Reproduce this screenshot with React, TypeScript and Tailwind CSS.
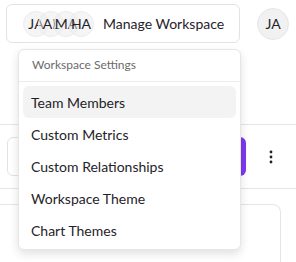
import React from 'react';

const team = ['JA', 'AL', 'MA', 'HA'];
const items = ['Team Members', 'Custom Metrics', 'Custom Relationships', 'Workspace Theme', 'Chart Themes'];

export default function App() {
  return (
    <div className="relative w-[296px] h-[262px] overflow-hidden bg-white font-['Lato',sans-serif] text-[#1f2328]">
      {/* Header */}
      <div className="h-[125px] border-b border-[#e5e5e5]">
        <div className="flex items-center pl-[6px] pt-[4px]">
          <button className="flex items-center gap-[9px] h-[39px] pl-4 pr-[15px] border border-[#e3e3e3] rounded-md bg-white">
            <div className="flex">
              {team.map((t, i) => (
                <div
                  key={t}
                  className={`w-[26px] h-[26px] shrink-0 rounded-full bg-[#ebebeb]/50 border border-[#ececec] flex items-center justify-center text-[14px] leading-none text-[#1f2328] whitespace-nowrap ${i > 0 ? '-ml-[11px]' : ''}`}
                >
                  {t}
                </div>
              ))}
            </div>
            <span className="text-[14px] text-[#1f2328]">Manage Workspace</span>
          </button>
          <div className="ml-[17px] w-8 h-8 rounded-full bg-[#f1f1f1] border border-[#e6e6e6] flex items-center justify-center text-[14px] text-[#1f2328]">
            JA
          </div>
        </div>
      </div>

      {/* Toolbar */}
      <div className="flex items-center py-3 pl-[7px] border-b border-[#e5e5e5]">
        <div className="flex-1 flex h-[39px] max-w-[239px]">
          <div className="flex-1 border border-[#e3e3e3] rounded-l-md" />
          <div className="w-[80px] bg-[#7c3aed] rounded-r-md" />
        </div>
        <div className="w-[50px] flex justify-center">
          <svg width="18" height="18" viewBox="0 0 18 18">
            <circle cx="9" cy="4" r="1.4" fill="#1f2328" />
            <circle cx="9" cy="9" r="1.4" fill="#1f2328" />
            <circle cx="9" cy="14" r="1.4" fill="#1f2328" />
          </svg>
        </div>
      </div>

      {/* Card */}
      <div className="pt-[15px]">
        <div className="w-[281px] h-[80px] border border-l-0 border-[#e5e5e5] rounded-tr-lg" />
      </div>

      {/* Dropdown menu */}
      <div className="absolute left-[18px] top-[49px] w-[223px] bg-white border border-[#e6e6e6] rounded-md shadow-[0_4px_10px_rgba(0,0,0,0.12)]">
        <div className="px-[13px] pt-[7px] pb-[8px] text-[12px] leading-4 text-[#6b6b6b]">Workspace Settings</div>
        <div className="h-px bg-[#ececec]" />
        <div className="px-1 pt-1 pb-[3px]">
          {items.map((item, i) => (
            <div
              key={item}
              className={`h-8 px-2 flex items-center rounded-md text-[14px] text-[#1f2328] ${i === 0 ? 'bg-[#f3f3f3]' : ''}`}
            >
              {item}
            </div>
          ))}
        </div>
      </div>
    </div>
  );
}
